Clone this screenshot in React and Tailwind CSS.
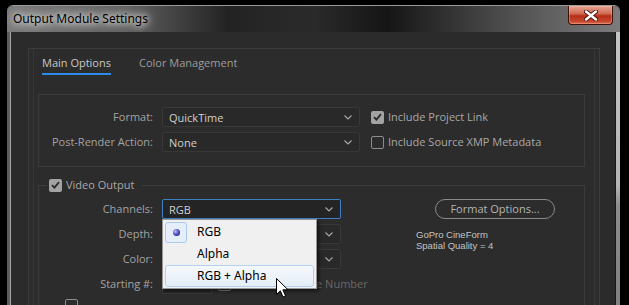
import React from 'react';

const ui = { fontFamily: '"Open Sans", "Noto Sans", sans-serif' };

const Chevron = () => (
  <svg width="8" height="5" viewBox="0 0 8 5" className="text-[#a8a8a8]">
    <path d="M0.5 0.5L4 4L7.5 0.5" fill="none" stroke="currentColor" strokeWidth="1.1" />
  </svg>
);

const Dropdown = ({ value, width, focused }) => (
  <div
    className={`flex h-[20px] items-center justify-between rounded-[2px] border pl-[6px] pr-[7px] ${
      focused ? 'border-[#3d7fc4] bg-[#242424]' : 'border-[#383838] bg-[#292929]'
    } ${width}`}
  >
    <span className="text-[11px] leading-none text-[#d0d0d0]">{value}</span>
    <Chevron />
  </div>
);

const Check = ({ checked }) =>
  checked ? (
    <span className="flex h-[13px] w-[13px] shrink-0 items-center justify-center rounded-[2px] bg-[#a3a3a3]">
      <svg width="9" height="8" viewBox="0 0 9 8">
        <path d="M1 4.2L3.4 6.6L8 1.2" fill="none" stroke="#2b2b2b" strokeWidth="1.8" />
      </svg>
    </span>
  ) : (
    <span className="block h-[13px] w-[13px] shrink-0 rounded-[2px] border-[1.5px] border-[#8c8c8c]" />
  );

const Row = ({ label, children }) => (
  <div className="flex h-[20px] items-center">
    <span className="w-[114px] shrink-0 text-right text-[11px] text-[#a3a3a3]">{label}</span>
    <div className="relative ml-[9px] flex shrink-0 items-center">{children}</div>
  </div>
);

const Cursor = () => (
  <svg width="13" height="20" viewBox="0 0 13 20" className="absolute left-[113px] top-[58px]">
    <path d="M0.5 0.5L0.5 16.5L4.3 12.8L7 19L9.6 17.9L6.9 11.8L12 11.8Z" fill="#fff" stroke="#000" strokeWidth="1" strokeLinejoin="round" />
  </svg>
);

const ChannelsMenu = () => (
  <div
    className="absolute left-0 top-full z-10 w-[155px] border border-[#979797] bg-[#f0f0f0] px-[2px] pb-[1px] pt-[1px] shadow-[2px_2px_3px_rgba(0,0,0,0.55)]"
    style={{ fontFamily: '"Noto Sans", sans-serif' }}
  >
    <div className="flex h-[22px] items-center">
      <span className="flex h-[21px] w-[22px] items-center justify-center rounded-[3px] border border-[#a9c9ea] bg-[#e6eff9]">
        <span className="h-[7px] w-[7px] rounded-full bg-[radial-gradient(circle_at_35%_35%,#c0c0ff,#4343b4_55%,#17174f)]" />
      </span>
      <span className="ml-[10px] text-[12px] text-black">RGB</span>
    </div>
    <div className="flex h-[22px] items-center">
      <span className="w-[22px]" />
      <span className="ml-[10px] text-[12px] text-black">Alpha</span>
    </div>
    <div className="flex h-[22px] items-center rounded-[3px] border border-[#b4d2ef] bg-[linear-gradient(180deg,#f6f9fd,#e4edf7)]">
      <span className="w-[21px]" />
      <span className="ml-[10px] text-[12px] text-black">RGB + Alpha</span>
    </div>
    <Cursor />
  </div>
);

export default function App() {
  return (
    <div className="h-[305px] w-[629px] overflow-hidden bg-black" style={ui}>
      <div className="ml-[7px] mt-[5px] w-[613px] overflow-hidden rounded-t-[6px] border-t border-[#9a9a9a]">
        {/* title bar */}
        <div className="flex h-[26px] items-start justify-between bg-[linear-gradient(90deg,#7a7a7a_0%,#5e5e5e_20%,#232323_36%,#2a2a2a_50%,#151515_62%,#555555_84%,#7c7c7c_100%)]">
          <span
            className="ml-[6px] mt-[5px] text-[12px] leading-[16px] text-black [text-shadow:0_0_6px_#ffffff,0_0_10px_#e0e0e0,0_0_14px_#c8c8c8]"
            style={{ fontFamily: '"Noto Sans", sans-serif' }}
          >
            Output Module Settings
          </span>
          <button className="mr-[7px] flex h-[19px] w-[45px] items-center justify-center rounded-b-[4px] border border-t-0 border-[#3c120a] bg-[linear-gradient(180deg,#e6a493_0%,#d06c55_42%,#b52e19_55%,#c4472d_85%,#de6d4e_100%)] shadow-[inset_0_0_0_1px_rgba(255,200,180,0.35)]">
            <svg width="14" height="11" viewBox="0 0 14 11">
              <path d="M2 1.5L12 9.5M12 1.5L2 9.5" stroke="#4a1208" strokeWidth="4.2" strokeLinecap="round" />
              <path d="M2 1.5L12 9.5M12 1.5L2 9.5" stroke="#ffffff" strokeWidth="2.4" strokeLinecap="round" />
            </svg>
          </button>
        </div>

        <div className="flex">
          <div className="w-[4px] shrink-0 border-r border-[#a8a8a8] bg-[#5c5c5c]" />

          {/* client area */}
          <div className="h-[280px] flex-1 bg-[#2b2b2b] pl-[17px] pr-[15px] pt-[16px]">
            <div className="h-full border-x border-t border-[#3c3c3c] bg-[#2c2c2c]">
              <div className="mx-[4px] h-full border-x border-[#363636]">
                {/* tabs */}
                <div className="flex pl-[8px] pt-[6px]">
                  <span className="border-b-2 border-[#2b8ae8] pb-[2px] text-[11px] leading-[16px] text-[#c8c8c8]">Main Options</span>
                  <span className="ml-[28px] text-[11px] leading-[16px] text-[#9c9c9c]">Color Management</span>
                </div>

                {/* format group */}
                <div className="ml-[4px] mt-[19px] w-[547px] border border-[#3c3c3c] pb-[14px] pt-[12px]">
                  <div className="flex flex-col gap-[5px]">
                    <Row label="Format:">
                      <Dropdown value="QuickTime" width="w-[198px]" />
                      <span className="ml-[11px]">
                        <Check checked />
                      </span>
                      <span className="ml-[4px] text-[11px] text-[#a8a8a8]">Include Project Link</span>
                    </Row>
                    <Row label="Post-Render Action:">
                      <Dropdown value="None" width="w-[198px]" />
                      <span className="ml-[11px]">
                        <Check />
                      </span>
                      <span className="ml-[4px] text-[11px] text-[#a8a8a8]">Include Source XMP Metadata</span>
                    </Row>
                  </div>
                </div>

                {/* video output group */}
                <fieldset className="ml-[4px] mt-[11px] w-[547px] border border-[#3c3c3c] pt-[7px]">
                  <legend className="ml-[8px] flex h-[14px] items-center pl-[2px] pr-[8px]">
                    <Check checked />
                    <span className="ml-[4px] text-[11px] text-[#a8a8a8]">Video Output</span>
                  </legend>
                  <div className="flex">
                    <div className="flex w-[302px] shrink-0 flex-col gap-[5px]">
                      <Row label="Channels:">
                        <Dropdown value="RGB" width="w-[179px]" focused />
                        <ChannelsMenu />
                      </Row>
                      <Row label="Depth:">
                        <Dropdown value="" width="w-[179px]" />
                      </Row>
                      <Row label="Color:">
                        <Dropdown value="" width="w-[179px]" />
                      </Row>
                      <Row label="Starting #:">
                        <span className="h-[20px] w-[50px] border border-[#383838] bg-[#262626]" />
                        <span className="ml-[6px]">
                          <Check />
                        </span>
                        <span className="ml-[3px] text-[11px] text-[#686868]">Use Comp Frame Number</span>
                      </Row>
                      <div className="ml-[26px] flex h-[13px]">
                        <Check />
                      </div>
                    </div>
                    <div className="ml-[75px] flex flex-col">
                      <button className="ml-[19px] h-[20px] w-[120px] rounded-full border border-[#8a8a8a] text-[11px] text-[#b4b4b4]">
                        Format Options...
                      </button>
                      <div
                        className="mt-[10px] text-[9.5px] leading-[11px] text-[#c4c4c4]"
                        style={{ fontFamily: '"Liberation Sans", sans-serif' }}
                      >
                        <div>GoPro CineForm</div>
                        <div>Spatial Quality = 4</div>
                      </div>
                    </div>
                  </div>
                </fieldset>
              </div>
            </div>
          </div>

          <div className="w-[5px] shrink-0 border-l border-[#1a1a1a] bg-[linear-gradient(180deg,#c4c4c4,#b4b4b4_55%,#8c8c8c_62%,#808080)]" />
        </div>
      </div>
    </div>
  );
}
